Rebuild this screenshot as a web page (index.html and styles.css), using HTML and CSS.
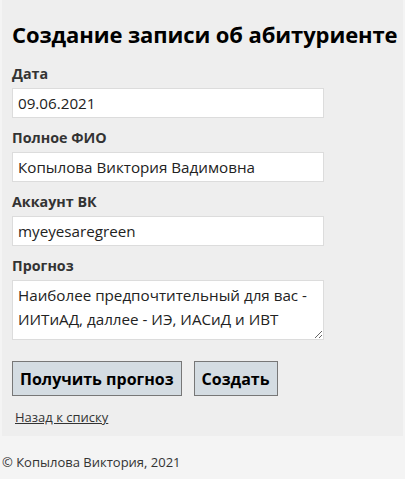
FILE: index.html
```html
<!DOCTYPE html>
<html lang="ru">
<head>
<meta charset="utf-8">
<title>Создание записи об абитуриенте</title>
<link rel="stylesheet" href="styles.css">
</head>
<body>
<main class="main">
  <h1 class="title">Создание записи об абитуриенте</h1>
  <form class="form">
    <div class="group">
      <label class="label">Дата</label>
      <input class="field" type="text" value="09.06.2021">
    </div>
    <div class="group">
      <label class="label">Полное ФИО</label>
      <input class="field" type="text" value="Копылова Виктория Вадимовна">
    </div>
    <div class="group">
      <label class="label">Аккаунт ВК</label>
      <input class="field" type="text" value="myeyesaregreen">
    </div>
    <div class="group">
      <label class="label">Прогноз</label>
      <textarea class="field area">Наиболее предпочтительный для вас - ИИТиАД, даллее - ИЭ, ИАСиД и ИВТ</textarea>
    </div>
    <div class="buttons">
      <button class="btn" type="button">Получить прогноз</button>
      <button class="btn" type="button">Создать</button>
    </div>
  </form>
  <a class="back" href="#">Назад к списку</a>
</main>
<footer class="footer">© Копылова Виктория, 2021</footer>
</body>
</html>
```

FILE: styles.css
```css
html, body {
  margin: 0;
  padding: 0;
  background: #f4f4f4;
}
body {
  font-family: "Open Sans", "Noto Sans", sans-serif;
  color: #333;
}
.main {
  margin: 0 2px;
  background: #eeeeee;
  padding: 20px 10px 9px;
}
.title {
  margin: 0 0 16px;
  font-size: 22px;
  line-height: 28px;
  font-weight: 700;
  color: #000;
  white-space: nowrap;
  letter-spacing: -0.1px;
}
.form {
  margin: 0;
}
.group {
  margin-bottom: 10px;
}
.label {
  display: block;
  font-size: 14.3px;
  line-height: 20px;
  font-weight: 700;
  color: #333;
  margin-bottom: 4px;
}
.field {
  display: block;
  box-sizing: border-box;
  width: 312px;
  height: 30px;
  margin: 0;
  padding: 0 5px;
  border: 1px solid #dcdcdc;
  background: #fff;
  font-family: inherit;
  font-size: 15.2px;
  color: #222;
  outline: none;
}
.area {
  height: 60px;
  padding: 2px 5px;
  line-height: 24px;
  resize: vertical;
  overflow: hidden;
}
.buttons {
  display: flex;
  gap: 12px;
  padding-top: 11px;
}
.btn {
  height: 35px;
  padding: 0 7px;
  border: 1px solid #777;
  background: #d4dce2;
  font-family: inherit;
  font-size: 16px;
  font-weight: 700;
  color: #000;
}
.back {
  display: inline-block;
  margin: 12px 0 0 3px;
  font-size: 13px;
  line-height: 18px;
  color: #333;
}
.footer {
  padding: 21px 2px 16px;
  font-size: 13px;
  line-height: 11px;
  color: #333;
}
```
